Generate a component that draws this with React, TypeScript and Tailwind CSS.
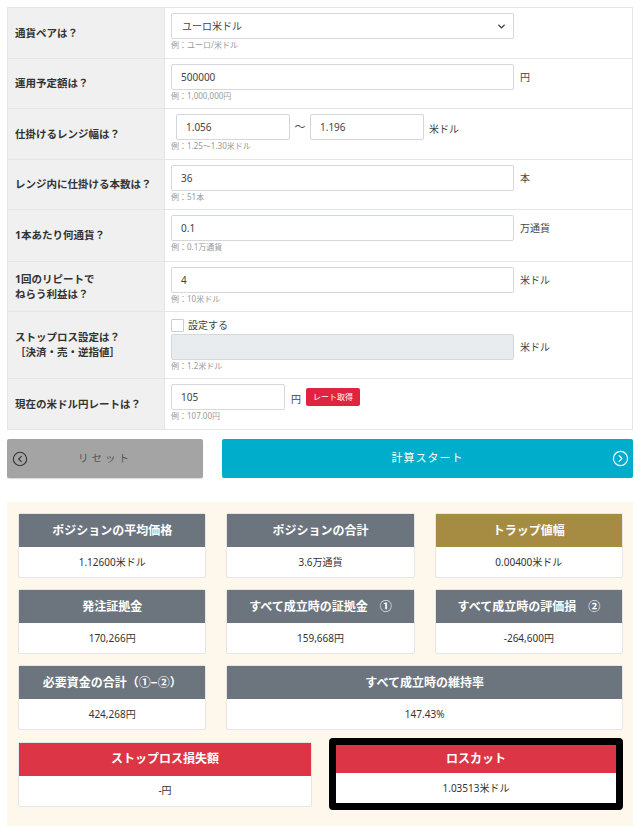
import React from "react";
import { ChevronDown, CircleChevronLeft, CircleChevronRight } from "lucide-react";

type Tone = "gray" | "gold" | "red";

const headerBg: Record<Tone, string> = {
  gray: "bg-[#6c757d]",
  gold: "bg-[#a68b42]",
  red: "bg-[#dc3545]",
};

function Hint({ children }: { children: React.ReactNode }) {
  return <p className="text-[8px] leading-[12px] text-[#999]">{children}</p>;
}

function Field({ value, className = "w-[343px]" }: { value: string; className?: string }) {
  return (
    <div
      className={`h-[26px] ${className} border border-[#d4d8dc] rounded-[2px] bg-white px-[9px] flex items-center text-[10px] text-[#444]`}
    >
      {value}
    </div>
  );
}

function Row({
  label,
  height,
  children,
  last,
}: {
  label: React.ReactNode;
  height: string;
  children: React.ReactNode;
  last?: boolean;
}) {
  return (
    <div className={`flex ${height} ${last ? "" : "border-b border-[#e3e5e8]"}`}>
      <div className="w-[157px] shrink-0 bg-[#f0f0f0] border-r border-[#e3e5e8] pl-[7px] flex items-center text-[10.5px] leading-[15px] font-bold text-[#333]">
        {label}
      </div>
      <div className="flex-1 pl-[6px] pt-[5px]">{children}</div>
    </div>
  );
}

function Unit({ children }: { children: React.ReactNode }) {
  return <span className="text-[10px] text-[#444]">{children}</span>;
}

function Card({
  title,
  value,
  tone = "gray",
  className = "",
}: {
  title: string;
  value: string;
  tone?: Tone;
  className?: string;
}) {
  return (
    <div className={`bg-white border border-[#e6e6e6] rounded-[2px] ${className}`}>
      <div
        className={`h-[33px] ${headerBg[tone]} flex items-center justify-center text-[12px] font-bold text-white`}
      >
        {title}
      </div>
      <div className="h-[30px] flex items-center justify-center text-[10px] text-[#333]">{value}</div>
    </div>
  );
}

export default function App() {
  return (
    <div className="w-[640px] h-[830px] bg-white px-[7px] pt-[7px] font-['Noto_Sans','Noto_Sans_CJK_JP',sans-serif] text-[#333]">
      {/* Input table */}
      <div className="border border-[#e3e5e8]">
        <Row label="通貨ペアは？" height="h-[51px]">
          <div className="h-[26px] w-[343px] border border-[#d4d8dc] rounded-[2px] bg-white pl-[10px] pr-[6px] flex items-center justify-between text-[10px] text-[#444]">
            <span>ユーロ米ドル</span>
            <ChevronDown size={11} strokeWidth={3} className="text-[#333]" />
          </div>
          <Hint>例：ユーロ/米ドル</Hint>
        </Row>
        <Row label="運用予定額は？" height="h-[50px]">
          <div className="flex items-center gap-[6px]">
            <Field value="500000" />
            <Unit>円</Unit>
          </div>
          <Hint>例：1,000,000円</Hint>
        </Row>
        <Row label="仕掛けるレンジ幅は？" height="h-[51px]">
          <div className="flex items-center">
            <Field value="1.056" className="w-[114px] ml-[5px]" />
            <span className="w-[20px] text-center text-[11px] text-[#444]">〜</span>
            <Field value="1.196" className="w-[114px]" />
            <span className="ml-[5px]">
              <Unit>米ドル</Unit>
            </span>
          </div>
          <Hint>例：1.25〜1.30米ドル</Hint>
        </Row>
        <Row label="レンジ内に仕掛ける本数は？" height="h-[50px]">
          <div className="flex items-center gap-[6px]">
            <Field value="36" />
            <Unit>本</Unit>
          </div>
          <Hint>例：51本</Hint>
        </Row>
        <Row label="1本あたり何通貨？" height="h-[52px]">
          <div className="flex items-center gap-[6px]">
            <Field value="0.1" />
            <Unit>万通貨</Unit>
          </div>
          <Hint>例：0.1万通貨</Hint>
        </Row>
        <Row
          label={
            <span>
              1回のリピートで
              <br />
              ねらう利益は？
            </span>
          }
          height="h-[50px]"
        >
          <div className="flex items-center gap-[6px]">
            <Field value="4" />
            <Unit>米ドル</Unit>
          </div>
          <Hint>例：10米ドル</Hint>
        </Row>
        <Row
          label={
            <span>
              ストップロス設定は？
              <br />
              ［決済・売・逆指値］
            </span>
          }
          height="h-[67px]"
        >
          <div className="flex items-center gap-[4px] h-[16px]">
            <span className="w-[13px] h-[13px] border border-[#ccc] bg-white rounded-[1px]" />
            <span className="text-[10px] text-[#444]">設定する</span>
          </div>
          <div className="flex items-center gap-[6px] mt-[1px]">
            <div className="h-[26px] w-[343px] border border-[#d4d8dc] rounded-[2px] bg-[#e9ecef]" />
            <Unit>米ドル</Unit>
          </div>
          <Hint>例：1.2米ドル</Hint>
        </Row>
        <Row label="現在の米ドル円レートは？" height="h-[50px]" last>
          <div className="flex items-center">
            <Field value="105" className="w-[114px]" />
            <span className="ml-[6px]">
              <Unit>円</Unit>
            </span>
            <button className="ml-[5px] h-[18px] px-[7px] bg-[#e02440] rounded-[2px] text-[8px] text-white">
              レート取得
            </button>
          </div>
          <Hint>例：107.00円</Hint>
        </Row>
      </div>

      {/* Buttons */}
      <div className="flex gap-[19px] mt-[9px]">
        <button className="relative w-[196px] h-[39px] bg-[#a4a4a4] rounded-[2px] flex items-center justify-center text-[10.5px] tracking-[3px] text-[#555] shadow-[0_1px_1px_rgba(0,0,0,0.15)]">
          <CircleChevronLeft size={16} strokeWidth={1.6} className="absolute left-[5px] text-[#333]" />
          リセット
        </button>
        <button className="relative flex-1 h-[39px] bg-[#00aecb] rounded-[2px] flex items-center justify-center text-[11px] tracking-[1px] text-white">
          計算スタート
          <CircleChevronRight size={17} strokeWidth={1.6} className="absolute right-[4px] text-white" />
        </button>
      </div>

      {/* Results */}
      <div className="mt-[24px] bg-[#fdf7ec] pl-[11px] pr-[10px] pt-[11px] pb-[16px]">
        <div className="grid grid-cols-3 gap-x-[20px] gap-y-[11px]">
          <Card title="ポジションの平均価格" value="1.12600米ドル" />
          <Card title="ポジションの合計" value="3.6万通貨" />
          <Card title="トラップ値幅" value="0.00400米ドル" tone="gold" />
          <Card title="発注証拠金" value="170,266円" />
          <Card title="すべて成立時の証拠金　①" value="159,668円" />
          <Card title="すべて成立時の評価損　②" value="-264,600円" />
          <Card title="必要資金の合計（①−②）" value="424,268円" />
          <Card title="すべて成立時の維持率" value="147.43%" className="col-span-2" />
        </div>
        <div className="grid grid-cols-2 gap-x-[17px] items-center mt-[8px]">
          <Card title="ストップロス損失額" value="-円" tone="red" />
          <div className="h-[72px] border-[7px] border-black rounded-[4px] bg-white">
            <div className="h-[28px] bg-[#dc3545] flex items-center justify-center text-[12px] font-bold text-white">
              ロスカット
            </div>
            <div className="h-[30px] flex items-center justify-center text-[10px] text-[#333]">
              1.03513米ドル
            </div>
          </div>
        </div>
      </div>
    </div>
  );
}
